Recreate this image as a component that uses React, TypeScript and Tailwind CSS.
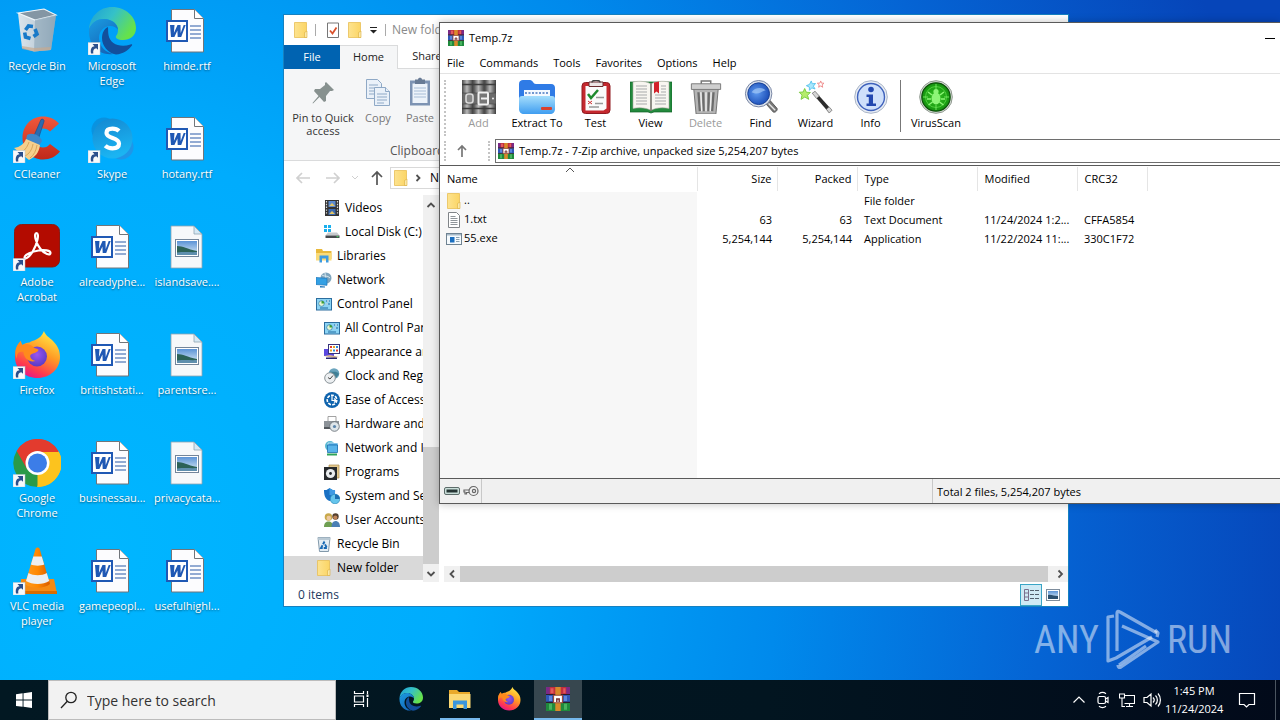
import React from "react";

type Kids = { children?: React.ReactNode };
type IconProps = { className?: string };

/* ---------- shared icons ---------- */

function Gradients() {
  return (
    <svg className="absolute size-0" aria-hidden="true">
      <defs>
        <linearGradient id="edgeA" x1="0" y1="0" x2="1" y2="0.5">
          <stop offset="0" stopColor="#1c9fd6" />
          <stop offset="0.5" stopColor="#35c1c8" />
          <stop offset="1" stopColor="#66e24a" />
        </linearGradient>
        <linearGradient id="edgeB" x1="0" y1="0" x2="0.6" y2="1">
          <stop offset="0" stopColor="#1b9de2" />
          <stop offset="1" stopColor="#1465b8" />
        </linearGradient>
        <linearGradient id="ffA" x1="0.8" y1="0" x2="0.3" y2="1">
          <stop offset="0" stopColor="#fff04a" />
          <stop offset="0.45" stopColor="#ff9a24" />
          <stop offset="0.8" stopColor="#ff3b4e" />
          <stop offset="1" stopColor="#e3158c" />
        </linearGradient>
        <radialGradient id="ffB" cx="0.5" cy="0.4" r="0.6">
          <stop offset="0" stopColor="#9a55f0" />
          <stop offset="1" stopColor="#5a3bc4" />
        </radialGradient>
        <linearGradient id="vlcA" x1="0" y1="0" x2="1" y2="0">
          <stop offset="0" stopColor="#ff9a1f" />
          <stop offset="0.5" stopColor="#ff8800" />
          <stop offset="1" stopColor="#d85c00" />
        </linearGradient>
        <linearGradient id="skA" x1="0" y1="0" x2="0.3" y2="1">
          <stop offset="0" stopColor="#1487d0" />
          <stop offset="1" stopColor="#1bb4f2" />
        </linearGradient>
        <linearGradient id="ccA" x1="0" y1="0" x2="0" y2="1">
          <stop offset="0" stopColor="#f0583c" />
          <stop offset="1" stopColor="#c0281a" />
        </linearGradient>
        <linearGradient id="binA" x1="0" y1="0" x2="1" y2="0">
          <stop offset="0" stopColor="#dbe5ec" />
          <stop offset="0.55" stopColor="#bfced9" />
          <stop offset="1" stopColor="#93a9ba" />
        </linearGradient>
        <linearGradient id="folA" x1="0" y1="0" x2="1" y2="0">
          <stop offset="0" stopColor="#fde38f" />
          <stop offset="1" stopColor="#fbd565" />
        </linearGradient>
        <linearGradient id="blueFolder" x1="0" y1="0" x2="0" y2="1">
          <stop offset="0" stopColor="#a5defc" />
          <stop offset="1" stopColor="#3f9df0" />
        </linearGradient>
        <radialGradient id="lens" cx="0.4" cy="0.45" r="0.6">
          <stop offset="0" stopColor="#5f9bf0" />
          <stop offset="1" stopColor="#1c4fb8" />
        </radialGradient>
        <radialGradient id="virus" cx="0.5" cy="0.5" r="0.5">
          <stop offset="0" stopColor="#35c322" />
          <stop offset="1" stopColor="#159310" />
        </radialGradient>
        <linearGradient id="metal" x1="0" y1="0" x2="1" y2="0">
          <stop offset="0" stopColor="#4c4c4c" />
          <stop offset="0.45" stopColor="#b9b9b9" />
          <stop offset="1" stopColor="#3e3e3e" />
        </linearGradient>
        <linearGradient id="sky" x1="0" y1="0" x2="0" y2="1">
          <stop offset="0" stopColor="#5b93d6" />
          <stop offset="1" stopColor="#dcecf6" />
        </linearGradient>
      </defs>
    </svg>
  );
}

function Shortcut() {
  return (
    <g>
      <rect x="0" y="35.500" width="12" height="12.500" fill="#f7f9fb" stroke="#b6c4d0" strokeWidth=".5" />
      <path d="M3 46.500c-.8-5 .8-7 3.500-7.300L4.500 37H10v5.800L8.300 41.200C5.800 41.500 4.800 43 5.300 46.500z" fill="#2b4f8c" />
    </g>
  );
}

function RecycleBin({ className = "size-12" }: IconProps) {
  return (
    <svg viewBox="0 0 48 48" className={className}>
      <path d="M5 6 31 2l12 6-5 35-17 1.500L9 41z" fill="url(#binA)" />
      <path d="M5 6 31 2l12 6-21 5z" fill="#8496a4" stroke="#eef5fa" strokeWidth="1.200" />
      <path d="M22 13l21-5-5 35-17 1.500z" fill="#8fa7b8" opacity=".65" />
      <path d="M9 39l12 2 17-1-.5 3L21 44.500 9 42z" fill="#c7a98f" opacity=".7" />
      <g fill="none" stroke="#1779c8" strokeWidth="3.600">
        <path d="M12.500 23l3-4 4.500.5" />
        <path d="M22 22l2 5-3.500 2.500" />
        <path d="M17.500 31.500 12.500 30l-.8-4.500" />
      </g>
    </svg>
  );
}

function EdgeIcon({ className = "size-12", shortcut = false }: IconProps & { shortcut?: boolean }) {
  return (
    <svg viewBox="0 0 48 48" className={className}>
      <path d="M1 22C2 9 12 0 24 0c14 0 24 10 24 21 0 8-6 12-13 12-5 0-8-2-7-4 1-1 2-3 2-6 0-6-6-11-14-11C9 12 4 16 1 22z" fill="url(#edgeA)" />
      <path d="M1 22C4 15 9 12 16 12c8 0 14 5 14 11-1-2-4-4-8-4-6 0-11 5-11 12 0 8 6 14 14 16-14 2-25-9-24-25z" fill="url(#edgeB)" />
      <path d="M20 20c-4 2-6 6-6 11 0 8 6 15 14 16.500 7-.5 12-4 16-9 .5-1-.3-1.500-1.500-1C32 41 22 37 20.500 28c-.5-3-.3-6-.5-8z" fill="#124f9c" />
      {shortcut && <Shortcut />}
    </svg>
  );
}

function WordDoc() {
  return (
    <svg viewBox="0 0 48 48" className="size-12">
      <path d="M8.500 2.500h23l9 9v33.500h-32z" fill="#fcfcfe" stroke="#71757a" />
      <path d="M31.500 2.500v9h9" fill="#fff" stroke="#71757a" />
      <path d="M27 19h11M27 23h11M27 27h11M27 31h11" stroke="#2a5aa8" strokeWidth="1.200" />
      <rect x="4" y="14" width="20" height="20" fill="#fff" stroke="#1f58b4" strokeWidth="2" />
      <path d="M7 18h4.500l-.6 8 3.600-8h3l.2 8 3-8h2l-4.500 12h-3.500l-.3-6.500-3 6.500H8z" fill="#1f58b4" />
    </svg>
  );
}

function ImageDoc() {
  return (
    <svg viewBox="0 0 48 48" className="size-12">
      <path d="M8 3h23l8 8v34H8z" fill="#f6f8fa" stroke="#8fa3b2" strokeWidth=".8" />
      <path d="M31 3v8h8z" fill="#d5e9f5" stroke="#8fa3b2" strokeWidth=".8" />
      <rect x="12.500" y="16.500" width="23" height="17" fill="#fff" stroke="#73859a" />
      <rect x="14" y="18" width="20" height="14" fill="url(#sky)" />
      <path d="M14 23c6 0 10 3 20 5v4H14z" fill="#2c6257" />
      <path d="M14 29.500c8-1 14 0 20-.5v3H14z" fill="#5f8fae" />
    </svg>
  );
}

function CCleaner() {
  return (
    <svg viewBox="0 0 48 48" className="size-12">
      <path d="M46 8.500C42 4 36 1.500 30 1.500 18 1.500 9.500 11 9.500 23S18 44.500 30 44.500c7 0 13-3 17-8l-10-7.500c-2 2.500-4 3.500-7 3.500-5 0-8.500-4-8.500-9.500s3.500-9.500 8.500-9.500c3 0 5 1 7 3z" fill="url(#ccA)" />
      <path d="M28 4.500c1.500-1 3.500 0 3 2L25 25l-5-2z" fill="#2b6bb0" stroke="#174a86" strokeWidth=".6" />
      <path d="M14 20c5-3 13 0 15 6l-3 5-13-6z" fill="#3f87c9" />
      <path d="M13 24l14 6c-1 8-5 12-11 15L1 33c6-1 10-4 12-9z" fill="#f6cf8c" />
      <path d="M16 27c-2 6-5 9-9 11M20 29c-1 6-4 10-8 12M24 30c-1 6-3 10-7 13" stroke="#d9a55a" fill="none" />
      <Shortcut />
    </svg>
  );
}

function SkypeIcon() {
  return (
    <svg viewBox="0 0 48 48" className="size-12">
      <circle cx="16" cy="15" r="12.500" fill="#1180c8" opacity=".55" />
      <circle cx="33" cy="32" r="12.500" fill="#2a8fe0" opacity=".75" />
      <circle cx="24.500" cy="23.500" r="20" fill="url(#skA)" />
      <path d="M31 16c-1.500-1.500-4-2.300-6.500-2.300-4 0-6 1.800-6 4.300 0 6 12.500 4 12.500 10.500 0 3.500-3 4.800-6.500 4.800-3 0-5.500-.8-7.300-2.500" fill="none" stroke="#fff" strokeWidth="4.200" />
      <Shortcut />
    </svg>
  );
}

function AcrobatIcon() {
  return (
    <svg viewBox="0 0 48 48" className="size-12">
      <rect x="1.500" y="1.500" width="45" height="42.500" rx="7" fill="#b30b00" stroke="#8a1a12" />
      <path d="M23.500 10c3 0 1 11-4 19-4 6-8 8-8 5.500 0-3 8-6 14-7s12 0 12 2.500c0 3-6 1-10-4-5-6-7-16-4-16z" fill="none" stroke="#fff" strokeWidth="2.200" />
      <Shortcut />
    </svg>
  );
}

function FirefoxIcon({ className = "size-12", shortcut = false }: IconProps & { shortcut?: boolean }) {
  return (
    <svg viewBox="0 0 48 48" className={className}>
      <path d="M31 0c1 4 6 7 9 10 5 5 7 10 7 16 0 12-10 21-22.500 21S2 38 2 26C2 19 4 14 8 10c0 2 .5 3 1.500 4 2-1.500 4-2.500 7-2.500C19 9 27 10 31 0z" fill="url(#ffA)" />
      <circle cx="24" cy="25.500" r="10" fill="url(#ffB)" />
      <path d="M8 10c0 2 .5 3 1.500 4 4-2 8-1 12 3 2 1 4 1 4 2-1 3-6 3-8 5-1 2 1 5 5 6-6 2-12-3-12-9C4 20 4 24 4 28c-4-8 0-15 4-18z" fill="#ff8a1c" />
      {shortcut && <Shortcut />}
    </svg>
  );
}

function ChromeIcon() {
  return (
    <svg viewBox="0 0 48 48" className="size-12">
      <path d="M24.500 24 3.700 12A24 24 0 0 1 45.300 12z" fill="#e33b2e" />
      <path d="M24.500 24 45.300 12A24 24 0 0 1 24.500 48l-3-6z" fill="#fcc31e" />
      <path d="M24.500 24 24.500 48A24 24 0 0 1 3.700 12z" fill="#2a9a48" />
      <path d="M24.500 13H45.800a24 24 0 0 0-42.100-1L14 30z" fill="#e33b2e" />
      <path d="M34 30 24 48A24 24 0 0 0 45.800 13H24.500z" fill="#fcc31e" />
      <circle cx="24.500" cy="24" r="12" fill="#fff" />
      <circle cx="24.500" cy="24" r="9.500" fill="#3c7de8" />
      <Shortcut />
    </svg>
  );
}

function VlcIcon() {
  return (
    <svg viewBox="0 0 48 48" className="size-12">
      <path d="M8 32h33l3 14.500H7z" fill="#f58a14" />
      <path d="M7 44h37v3H7z" fill="#d86c00" />
      <path d="M22.500 2c.8-2 3.500-2 4.200 0L37 37c-6 5-19 5-25 0z" fill="url(#vlcA)" />
      <path d="M20.300 9.500h8.500l2.400 8c-3 1.500-10 1.500-13.300 0zM15.500 26c5 3 13.500 3 18.300 0l2.400 8c-6 4-17 4-23.200 0z" fill="#eceef0" />
      <Shortcut />
    </svg>
  );
}

function Folder({ className = "size-4" }: IconProps) {
  return (
    <svg viewBox="0 0 16 16" className={`shrink-0 ${className}`}>
      <path d="M1.500.5h12v15h-12z" fill="url(#folA)" stroke="#e8bf55" strokeWidth=".8" />
      <path d="M11.500 10.500 14 9v6.500h-2.500z" fill="#fbe8a9" stroke="#dcae3d" strokeWidth=".6" />
    </svg>
  );
}

function RarIcon({ className = "size-4" }: IconProps) {
  return (
    <svg viewBox="0 0 16 16" className={`shrink-0 ${className}`}>
      <path d="M0 0h16v5H0z" fill="#c22f3c" />
      <path d="M0 5.200h16v5H0z" fill="#2f57b8" />
      <path d="M0 10.400h16V16H0z" fill="#1f8a3c" />
      <path d="M0 0h2.500v5H0zM13.500 0H16v5h-2.500z" fill="#7b2a86" />
      <path d="M3 .8h2v3.400H3zM11.500.8h1.500v3.400h-1.500z" fill="#e25a5f" />
      <path d="M2 6h2v3.400H2zM12 6h2v3.400h-2z" fill="#5c86dd" />
      <path d="M2 11.200h2v4H2zM12 11.200h2v4h-2z" fill="#48b45f" />
      <path d="M0 4.600h16v.8H0zM0 9.900h16v.8H0z" fill="#2b1c2a" />
      <path d="M6.200 0h3.600v16H6.200z" fill="#d88a2a" />
      <path d="M5 5.500h6v5H5z" fill="#fff" stroke="#9b4a3a" strokeWidth=".8" />
      <path d="M7.200 10V8h1.600v2" fill="none" stroke="#7d3030" strokeWidth="1" />
    </svg>
  );
}

/* ---------- tree icons ---------- */

const treeIcons: Record<string, React.ReactNode> = {
  video: (
    <>
      <rect x="1" y="0" width="14" height="16" fill="#333" />
      <path d="M2.500 1v14M13.500 1v14" stroke="#ddd" strokeWidth="1.200" strokeDasharray="1.400 1.400" />
      <rect x="4.500" y="1" width="7" height="6" fill="#5d8bd0" />
      <rect x="4.500" y="9" width="7" height="6" fill="#3d6bb0" />
      <path d="M5 6l3-3 3 3M5 14l3-3 3 3" fill="#e4c667" />
    </>
  ),
  disk: (
    <>
      <path d="M0 1h3v3H0zM4 1h3v3H4zM0 5h3v3H0zM4 5h3v3H4z" fill="#1ab0ee" />
      <path d="M4 8.500h9l2.500 3H1.500z" fill="#c7cacd" />
      <path d="M1.500 11.500h14V14h-14z" fill="#45494d" />
      <path d="M12.500 12.200h2v1h-2z" fill="#4be36a" />
    </>
  ),
  library: (
    <>
      <path d="M0 1h6l1 2h8.500v8H0z" fill="#e9b93b" />
      <path d="M0 5h15.500v7.500H0z" fill="#fadb78" />
      <path d="M3.500 14.500v-7h9v7h-2.500v-4H6v4z" fill="#3d9be0" />
    </>
  ),
  network: (
    <>
      <circle cx="10" cy="6" r="5.500" fill="#7fa5bd" />
      <path d="M6 3c3 2 5 0 8 3M9 1c0 3 2 6 1 10" stroke="#d7e7ef" fill="none" />
      <path d="M0 5.500l11 .8v7L0 12.500z" fill="#33a0e4" stroke="#1b73b8" strokeWidth=".7" />
      <path d="M4 14l5 .5v1H4z" fill="#1b73b8" />
    </>
  ),
  control: (
    <>
      <rect x=".5" y="2.500" width="15" height="11.500" fill="#8bd3f4" stroke="#2c6d9e" />
      <circle cx="5.500" cy="7.500" r="2.800" fill="#e9f7d3" stroke="#2f7aa8" strokeWidth=".7" />
      <path d="M5.500 7.500V4.700a2.800 2.800 0 0 1 2.800 2.800z" fill="#3e9e36" />
      <path d="M10 5h4M10 8h4M4 12h8" stroke="#1f6aa0" strokeWidth="1.200" />
      <path d="M12 4v2M11 7v2" stroke="#fff" />
    </>
  ),
  appearance: (
    <>
      <path d="M0 5h10v7H0z" fill="#5a48e0" />
      <path d="M0 12l10 2 5-1-9-2z" fill="#d4b08a" />
      <rect x="4.500" y=".5" width="11" height="9" fill="#fff" stroke="#39347a" />
      <path d="M6 2h2v2H6zM12 5.500h2v2h-2z" fill="#e23d31" />
      <path d="M9 2h2v2H9zM6 5.500h2v2H6z" fill="#e6a520" />
      <path d="M12 2h2v2h-2zM9 5.500h2v2H9z" fill="#2f8cd8" />
      <path d="M2 13.500h11v1.500H2z" fill="#2a2470" />
    </>
  ),
  clock: (
    <>
      <circle cx="10" cy="5.500" r="5.300" fill="#6aa4bd" />
      <path d="M6 3c3 2 6-1 9 3l-3 4z" fill="#3f7f95" />
      <circle cx="6" cy="10" r="5.300" fill="#eceff1" stroke="#8b9499" />
      <path d="M6 11 9 7.500M4 9.500 6 11" stroke="#444" fill="none" />
    </>
  ),
  ease: (
    <>
      <circle cx="8" cy="8" r="8" fill="#0f63ad" />
      <circle cx="8" cy="8" r="4.800" fill="none" stroke="#fff" strokeWidth="1.600" strokeDasharray="3 1.200" />
      <path d="M8 4v4.500h4M10 6.500l2.300 2-2.300 2" fill="none" stroke="#fff" strokeWidth="1.200" />
    </>
  ),
  hardware: (
    <>
      <path d="M4 0.500h8v5H4z" fill="#fff" stroke="#8c8c8c" strokeWidth=".8" />
      <path d="M0 5h15v6H0z" fill="#8d9399" />
      <path d="M0 11h15v2H0z" fill="#53585d" />
      <circle cx="10.500" cy="10.500" r="4.800" fill="#dfe6ea" stroke="#5f676d" strokeWidth=".8" />
      <circle cx="10.500" cy="10.500" r="1.600" fill="#5d86ac" />
    </>
  ),
  netint: (
    <>
      <circle cx="6" cy="6" r="5" fill="#58b7d2" />
      <path d="M4 3h10v7H4z" fill="#4ba8e2" stroke="#fff" strokeWidth=".6" />
      <path d="M3.500 5h10v7.500h-10z" fill="#58b4ea" stroke="#1d6fae" strokeWidth=".8" />
      <path d="M3 13.500h10v2H3z" fill="#2ea35a" />
    </>
  ),
  programs: (
    <>
      <path d="M5 1h10v13H5z" fill="#e4c98f" stroke="#ad8c4d" strokeWidth=".7" />
      <rect x="0" y="3" width="13" height="13" fill="#26292c" />
      <circle cx="6.500" cy="9.500" r="4.600" fill="#e9ecee" />
      <circle cx="6.500" cy="9.500" r="1.400" fill="#26292c" />
    </>
  ),
  system: (
    <>
      <path d="M0 2c3 .5 4-1 5.500-2C7 1 8.500 2.500 11 2c.5 5-1 9-5.500 11C1 11 0 7 0 2z" fill="#1a71c4" />
      <path d="M5.500 0C7 1 8.500 2.500 11 2c.2 2 0 4-.6 5.500L5.500 7z" fill="#3f9be4" />
      <circle cx="11" cy="11" r="4.800" fill="#65c5ec" stroke="#1f7fb4" strokeWidth=".6" />
      <path d="M11 11V6.200a4.800 4.800 0 0 1 4.800 4.800z" fill="#1b6fb0" />
    </>
  ),
  users: (
    <>
      <circle cx="4.500" cy="5" r="3.800" fill="#c9a94c" />
      <circle cx="4.800" cy="6" r="2.300" fill="#eec9a0" />
      <path d="M0 15c0-4 2-5.500 4.500-5.500S9 11 9 15z" fill="#6f9f52" />
      <circle cx="11.500" cy="4.500" r="3.200" fill="#54402f" />
      <circle cx="11.300" cy="5.600" r="2.100" fill="#bf8458" />
      <path d="M7.500 15c0-4 1.500-6 4-6S16 11 16 15z" fill="#4a7fb5" />
    </>
  ),
  bin: (
    <>
      <path d="M2 1.500h12l-1.500 14h-9z" fill="#e3edf4" stroke="#8299aa" />
      <path d="M2 1.500h12L13.700 4H2.300z" fill="#b9c9d4" />
      <path d="M5 12l3-5.500L11 12z" fill="none" stroke="#1668b4" strokeWidth="1.900" strokeDasharray="3.200 1" />
    </>
  ),
};

function TreeIcon({ name }: { name: string }) {
  if (name === "folder") return <Folder />;
  return (
    <svg viewBox="0 0 16 16" className="size-4 shrink-0">
      {treeIcons[name]}
    </svg>
  );
}

function Chevron({ d, className = "" }: { d: string; className?: string }) {
  return (
    <svg viewBox="0 0 16 16" className={`size-4 shrink-0 ${className}`} fill="none" stroke="#505050" strokeWidth="1.800">
      <path d={d} />
    </svg>
  );
}

/* ---------- desktop ---------- */

const shortcuts: { label: string; icon: React.ReactNode }[] = [
  { label: "Recycle Bin", icon: <RecycleBin /> },
  { label: "CCleaner", icon: <CCleaner /> },
  { label: "Adobe Acrobat", icon: <AcrobatIcon /> },
  { label: "Firefox", icon: <FirefoxIcon shortcut /> },
  { label: "Google Chrome", icon: <ChromeIcon /> },
  { label: "VLC media player", icon: <VlcIcon /> },
  { label: "Microsoft Edge", icon: <EdgeIcon shortcut /> },
  { label: "Skype", icon: <SkypeIcon /> },
  { label: "alreadyphe...", icon: <WordDoc /> },
  { label: "britishstati...", icon: <WordDoc /> },
  { label: "businessau...", icon: <WordDoc /> },
  { label: "gamepeopl...", icon: <WordDoc /> },
  { label: "himde.rtf", icon: <WordDoc /> },
  { label: "hotany.rtf", icon: <WordDoc /> },
  { label: "islandsave....", icon: <ImageDoc /> },
  { label: "parentsre...", icon: <ImageDoc /> },
  { label: "privacycata...", icon: <ImageDoc /> },
  { label: "usefulhighl...", icon: <WordDoc /> },
];

function DesktopIcons() {
  return (
    <div className="grid w-fit grid-flow-col grid-cols-[repeat(3,74px)] grid-rows-[repeat(6,108px)] gap-x-px pt-[7px]">
      {shortcuts.map((s) => (
        <button key={s.label} className="flex flex-col items-center gap-[3px] text-[11px] leading-[15px] text-white">
          {s.icon}
          <span className="max-w-[66px] text-center [text-shadow:0_1px_2px_rgba(0,0,0,0.5)]">{s.label}</span>
        </button>
      ))}
    </div>
  );
}

/* ---------- explorer window ---------- */

const tree: [string, string, number][] = [
  ["Videos", "video", 2],
  ["Local Disk (C:)", "disk", 2],
  ["Libraries", "library", 1],
  ["Network", "network", 1],
  ["Control Panel", "control", 1],
  ["All Control Panel Items", "control", 2],
  ["Appearance and Personalization", "appearance", 2],
  ["Clock and Region", "clock", 2],
  ["Ease of Access", "ease", 2],
  ["Hardware and Sound", "hardware", 2],
  ["Network and Internet", "netint", 2],
  ["Programs", "programs", 2],
  ["System and Security", "system", 2],
  ["User Accounts", "users", 2],
  ["Recycle Bin", "bin", 1],
  ["New folder", "folder", 1],
];

function RibbonButton({ children, label, muted = false }: Kids & { label: string; muted?: boolean }) {
  return (
    <button className={`flex flex-col items-center gap-[2px] leading-[13px] ${muted ? "text-[#777]" : "text-[#333]"}`}>
      {children}
      <span className="text-center">{label}</span>
    </button>
  );
}

function NavArrow({ d, stroke }: { d: string; stroke: string }) {
  return (
    <svg viewBox="0 0 16 16" className="size-4" fill="none" stroke={stroke} strokeWidth="1.700">
      <path d={d} />
    </svg>
  );
}

function Explorer() {
  return (
    <section aria-label="New folder" className="absolute left-[283px] top-[14px] flex w-[786px] flex-col border border-[#1681c0] bg-white text-[11px] text-black">
      <header className="flex h-[30px] items-center gap-[6px] pl-[9px] text-[#8a8a8a]">
        <Folder />
        <span className="h-3 w-px bg-[#aaa]" />
        <svg viewBox="0 0 16 16" className="ml-[3px] size-4">
          <path d="M2.500 1h11v14.500h-11z" fill="#fff" stroke="#777" />
          <path d="M5 8.500l2.500 3 4-6" fill="none" stroke="#d9512c" strokeWidth="1.800" />
        </svg>
        <Folder />
        <svg viewBox="0 0 9 9" className="size-[9px]">
          <path d="M1 1.500h7" stroke="#222" />
          <path d="M1 4h7L4.500 7.500z" fill="#222" />
        </svg>
        <span className="ml-px h-3 w-px bg-[#aaa]" />
        <span className="text-[12px]">New folder</span>
      </header>
      <nav className="flex h-6 text-[#222]">
        <button className="w-14 bg-[#0063b1] text-white">File</button>
        <button className="w-[58px] border-r border-t border-[#dadbdc] bg-[#f5f6f7]">Home</button>
        <button className="w-[58px] border-b border-[#dadbdc]">Share</button>
        <span className="flex-1 border-b border-[#dadbdc]" />
      </nav>
      <div className="flex h-[92px] flex-col justify-between border-b border-[#dadbdc] bg-[#f5f6f7] pt-2">
        <div className="flex">
          <div className="w-[78px] px-1">
            <RibbonButton label="Pin to Quick access">
              <svg viewBox="0 0 32 32" className="size-8">
                <path d="M19 5l8 8-2 1-2 0-4 5v5l-2 1-4.500-5L6 26.500l-.5-.5 6-7-4.500-5 1-2h5l5-4v-2z" fill="#87918f" />
              </svg>
            </RibbonButton>
          </div>
          <div className="flex w-8 justify-center">
            <RibbonButton label="Copy" muted>
              <svg viewBox="0 0 32 32" className="size-8" fill="#eaf1f9" stroke="#8fa9c6">
                <path d="M4.500 2.500h11l4 4v15h-15z" />
                <path d="M7 8h9M7 11h9M7 14h9M7 17h7" />
                <path d="M12.500 10.500h11l4 4v14h-15z" />
                <path d="M23.500 10.500v4h4M15 17h10M15 20h10M15 23h10M15 26h7" />
              </svg>
            </RibbonButton>
          </div>
          <div className="ml-2 flex w-9 justify-center">
            <RibbonButton label="Paste" muted>
              <svg viewBox="0 0 32 32" className="size-8">
                <rect x="6" y="3.500" width="20" height="25" fill="#7d93b3" />
                <rect x="8.500" y="6.500" width="15" height="19.500" fill="#edf3fa" />
                <path d="M10 11h12M10 14h12M10 17h12M10 20h12" stroke="#a8bdd6" />
                <path d="M11 2.500h3c0-2.500 4-2.500 4 0h3V7H11z" fill="#687b95" />
              </svg>
            </RibbonButton>
          </div>
        </div>
        <span className="pl-[106px] text-[12px] text-[#555]">Clipboard</span>
      </div>
      <div className="flex h-[34px] items-center gap-[5px] pl-[11px]">
        <div className="flex items-center gap-[10px]">
          <NavArrow d="M15 8H2M7 3 2 8l5 5" stroke="#d0d0d0" />
          <span className="pl-1">
            <NavArrow d="M1 8h13M9 3l5 5-5 5" stroke="#d0d0d0" />
          </span>
          <svg viewBox="0 0 8 8" className="size-2">
            <path d="M1 2l3 3 3-3" stroke="#d0d0d0" fill="none" />
          </svg>
          <NavArrow d="M8 15V2M3 7l5-5 5 5" stroke="#555" />
        </div>
        <div className="flex h-[22px] flex-1 items-center gap-px border border-[#d9d9d9] px-[2px] text-[12px]">
          <Folder />
          <Chevron d="M6.500 5l3 3-3 3" />
          <span className="pl-[3px]">New folder</span>
        </div>
      </div>
      <div className="flex h-[388px] pb-px text-[12px]">
        <ul className="w-[139px] overflow-hidden pt-px">
          {tree.map(([label, icon, level]) => (
            <li
              key={label}
              className={`flex h-6 items-center gap-[5px] whitespace-nowrap ${level === 2 ? "pl-10" : "pl-8"} ${label === "New folder" ? "bg-[#d9d9d9]" : ""}`}
            >
              <TreeIcon name={icon} />
              <span>{label}</span>
            </li>
          ))}
        </ul>
        <div className="flex w-4 flex-col items-center bg-[#f0f0f0]">
          <Chevron d="M4.500 10 8 6.500l3.500 3.500" className="mt-[2px]" />
          <div className="flex-1" />
          <div className="h-[117px] w-full bg-[#cdcdcd]" />
          <Chevron d="M4.500 6 8 9.500 11.500 6" className="mt-[2px]" />
        </div>
        <div className="flex flex-1 flex-col justify-end pl-[5px]">
          <div className="flex h-4 items-center bg-[#f0f0f0]">
            <Chevron d="M10 4.500 6.500 8l3.500 3.500" />
            <div className="h-full flex-1 bg-[#cdcdcd]" />
            <Chevron d="M6.500 4.500 10 8l-3.500 3.500" className="ml-1" />
          </div>
        </div>
      </div>
      <footer className="flex h-[23px] items-center pl-[14px] pr-1 text-[12px] text-[#1d3a5f]">
        <span className="flex-1">0 items</span>
        <button aria-label="Details view" className="flex size-[22px] items-center justify-center border border-[#3aa5c6] bg-[#cfeaf5]">
          <svg viewBox="0 0 18 14" className="h-[14px] w-[18px]" fill="none" stroke="#51606d">
            <path d="M2.500 1.500h4v11h-4zM2.500 5h4M2.500 9h4" stroke="#7a6f8d" />
            <path d="M8 2.500h4M13 2.500h4M8 6.500h4M13 6.500h4M8 10.500h4M13 10.500h4" />
          </svg>
        </button>
        <button aria-label="Thumbnail view" className="flex size-[22px] items-center justify-center">
          <svg viewBox="0 0 14 12" className="h-3 w-[14px]">
            <rect x=".5" y=".5" width="13" height="11" fill="#fff" stroke="#7e8d9c" />
            <rect x="2" y="2" width="10" height="7" fill="url(#sky)" />
            <path d="M2 6c3-1 6 1 10 1v3H2z" fill="#2b4f6e" />
          </svg>
        </button>
      </footer>
    </section>
  );
}

/* ---------- archive window ---------- */

function Books() {
  return (
    <svg viewBox="0 0 34 34" className="size-[34px]">
      <rect width="34" height="34" fill="#5a5a5a" />
      <rect x="0" width="11" height="34" fill="url(#metal)" />
      <rect x="11.500" width="11" height="34" fill="url(#metal)" />
      <rect x="23" width="11" height="34" fill="url(#metal)" />
      <path d="M0 4.500h34M0 28.500h34" stroke="#3d3d3d" strokeWidth="1.500" />
      <path d="M0 13h34v11H0z" fill="#6b6b6b" stroke="#444" strokeWidth=".6" />
      <rect x="4" y="14" width="7" height="9" rx="2.500" fill="#888" stroke="#d9d9d9" strokeWidth="1.600" />
      <rect x="16.500" y="12.500" width="9.500" height="12" rx="1" fill="#777" stroke="#f1f1f1" strokeWidth="2" />
      <path d="M19 18.500h6" stroke="#f1f1f1" strokeWidth="2" />
      <circle cx="31" cy="18.500" r="1" fill="#eee" />
    </svg>
  );
}

function ExtractIcon() {
  return (
    <svg viewBox="0 0 36 34" className="h-[34px] w-9">
      <path d="M0 4c0-3 2-4 4-4h7c3 0 3 4 6 4h15c3 0 4 2 4 4v20H0z" fill="#2f7be6" />
      <path d="M5 10h26v10H5z" fill="#f4f9ff" />
      <path d="M6 13h24" stroke="#7196cf" strokeWidth="2" strokeDasharray="2 1.500" />
      <path d="M0 19c0-2 1-3 3-3h30c2 0 3 1 3 3v10c0 3-2 5-5 5H5c-3 0-5-2-5-5z" fill="url(#blueFolder)" />
      <rect x="22" y="27" width="11" height="3" rx="1" fill="#d8412f" />
    </svg>
  );
}

function TestIcon() {
  return (
    <svg viewBox="0 0 30 34" className="h-[34px] w-[30px]">
      <rect x="1" y="2.500" width="28" height="31" rx="3.500" fill="#c5282e" stroke="#8f1a20" />
      <path d="M4.500 6h21v22.500l-3 2h-18z" fill="#fafafa" />
      <path d="M8 2h14v4.500H8z" fill="#ece4e4" stroke="#6b2b2e" />
      <path d="M11 2.500c0-3 8-3 8 0" fill="none" stroke="#444" strokeWidth="1.500" />
      <path d="M7 14l3 4 7-8" fill="none" stroke="#1e8a2d" strokeWidth="2.500" />
      <path d="M15 17.500h8M14 23.500h8M8 27h10" stroke="#999" strokeWidth="1.300" />
      <path d="M7 21l4 3M11 21l-4 3" stroke="#ce3030" />
    </svg>
  );
}

function ViewIcon() {
  return (
    <svg viewBox="0 0 42 34" className="h-[34px] w-[42px]">
      <path d="M0 2h42v30H24l-3 1-3-1H0z" fill="#238a3d" stroke="#0f5f25" strokeWidth=".7" />
      <path d="M3 2c7-1.500 14-.5 18 2 4-2.500 11-3.500 18-2v26.500c-7-1.500-14-.5-18 2-4-2.500-11-3.500-18-2z" fill="#f8f6f1" stroke="#aaa79e" strokeWidth=".6" />
      <path d="M21 3.500V31" stroke="#6d6a62" strokeWidth="1.500" />
      <path d="M6 6h11M6 9h11M6 12h11M6 15h11M6 18h11M6 21h11M6 24h11M31 6h5M31 9h5M31 12h5M25 15h11M25 18h11M25 21h11M25 24h11" stroke="#a7a9aa" />
      <path d="M24 2.500l5-1v12l-2.500-2-2.500 2z" fill="#d3232b" />
    </svg>
  );
}

function DeleteIcon() {
  return (
    <svg viewBox="0 0 32 36" className="h-[34px] w-8">
      <path d="M3 9h26l-2.500 27h-21z" fill="#b4b4b4" stroke="#707070" />
      <path d="M8 13l1.500 20M13 13l.5 20M19 13l-.5 20M24 13l-1.500 20" stroke="#6c6c6c" strokeWidth="2.400" />
      <path d="M10.500 13l1 20M16 13v20M21.500 13l-1 20" stroke="#eee" strokeWidth="1.500" />
      <path d="M.5 4h31v6H.5z" fill="#cfcfcf" stroke="#777" />
      <path d="M11 4V1h10v3" fill="none" stroke="#777" strokeWidth="1.600" />
    </svg>
  );
}

function FindIcon() {
  return (
    <svg viewBox="0 0 36 36" className="h-[34px] w-9">
      <path d="M23 25l4-4 8 9c1 2-2 5-4 4z" fill="#777" stroke="#444" strokeWidth=".8" />
      <path d="M26 25l7 7" stroke="#e5e5e5" strokeWidth="1.500" />
      <circle cx="15.500" cy="14.500" r="14" fill="#dde3ec" stroke="#7482a0" />
      <circle cx="15.500" cy="14.500" r="11.500" fill="url(#lens)" stroke="#173f93" />
      <path d="M8 13c3-5 11-6 15-2-4 0-7 6-15 2z" fill="#a9ccf8" opacity=".65" />
    </svg>
  );
}

function WizardIcon() {
  return (
    <svg viewBox="0 0 36 36" className="h-[34px] w-9">
      <path d="M14 14l3-2 18 20-3 3z" fill="#2c2c2c" />
      <path d="M14 14l3-2 4.500 5-3 2.500zM29 31l3-2.500 3 3.500-3 3z" fill="#d5d5d5" stroke="#777" strokeWidth=".6" />
      <path d="M6 9l1.800 4 4.200.2-3 3 1.300 4.300L6.200 18l-4 2.500 1-4.500-3-3 4.200-.3z" fill="#b5ec6c" stroke="#79cb3e" />
      <path d="M13 1l1 3 3.500-.3-2.300 2.800 1.800 3L13.500 8.300 11 11V7.500L7.800 6l3.300-1.300z" fill="#a9e7fc" stroke="#58c4ee" />
      <path d="M23 1l.8 2.300 2.700.1-2 1.700.6 2.600L23 6.300l-2.200 1.400.6-2.600-2-1.700 2.700-.1z" fill="#fff" stroke="#ee8a8a" />
    </svg>
  );
}

function InfoIcon() {
  return (
    <svg viewBox="0 0 34 34" className="size-[34px]">
      <circle cx="17" cy="17" r="16.300" fill="#e8edf5" stroke="#a9b4c6" />
      <circle cx="17" cy="17" r="13.500" fill="#cfe0fb" stroke="#3f62bc" strokeWidth="1.400" />
      <circle cx="17" cy="9.500" r="2.800" fill="#2348b0" />
      <path d="M12.500 14.500h6.500v9h3v2.500H12.500v-2.500h2.300v-6.500h-2.300z" fill="#2348b0" />
    </svg>
  );
}

function VirusIcon() {
  return (
    <svg viewBox="0 0 34 34" className="size-[34px]">
      <circle cx="17" cy="17" r="16.300" fill="#d9ddd9" stroke="#8d978d" />
      <circle cx="17" cy="17" r="14.200" fill="url(#virus)" stroke="#0d4f0a" strokeWidth="1.200" />
      <circle cx="17" cy="17" r="10.500" fill="none" stroke="#4fd03c" />
      <path d="M17 4v5M17 25v5M4 17h5M25 17h5" stroke="#6fe45c" />
      <ellipse cx="17" cy="18.500" rx="4.500" ry="6" fill="#8df577" />
      <circle cx="17" cy="11.500" r="2.600" fill="#8df577" />
      <path d="M13 15l-4-3M21 15l4-3M12 19H8M22 19h4M13.500 22l-4 3M20.500 22l4 3" stroke="#8df577" strokeWidth="1.500" />
    </svg>
  );
}

const tools: { label: string; icon: React.ReactNode; off?: boolean; wide?: boolean }[] = [
  { label: "Add", icon: <Books />, off: true },
  { label: "Extract To", icon: <ExtractIcon />, wide: true },
  { label: "Test", icon: <TestIcon /> },
  { label: "View", icon: <ViewIcon /> },
  { label: "Delete", icon: <DeleteIcon />, off: true },
  { label: "Find", icon: <FindIcon /> },
  { label: "Wizard", icon: <WizardIcon /> },
  { label: "Info", icon: <InfoIcon /> },
];

function ToolButton({ label, icon, off, wide }: { label: string; icon: React.ReactNode; off?: boolean; wide?: boolean }) {
  return (
    <button className={`flex flex-col items-center gap-px whitespace-nowrap leading-4 ${wide ? "w-[62px]" : "w-[55px]"} ${off ? "text-[#9a9a9a]" : "text-black"}`}>
      {icon}
      <span>{label}</span>
    </button>
  );
}

const files = [
  { name: "..", kind: "folder", size: "", packed: "", type: "File folder", modified: "", crc: "" },
  { name: "1.txt", kind: "text", size: "63", packed: "63", type: "Text Document", modified: "11/24/2024 1:2...", crc: "CFFA5854" },
  { name: "55.exe", kind: "app", size: "5,254,144", packed: "5,254,144", type: "Application", modified: "11/22/2024 11:...", crc: "330C1F72" },
];

function FileIcon({ kind }: { kind: string }) {
  if (kind === "folder") return <Folder />;
  return (
    <svg viewBox="0 0 16 16" className="size-4 shrink-0">
      {kind === "text" ? (
        <>
          <path d="M2.500.5h8l3 3v12h-11z" fill="#fff" stroke="#808488" />
          <path d="M4.500 4.500h5M4.500 6.500h7M4.500 8.500h7M4.500 10.500h7M4.500 12.500h7" stroke="#8f959a" />
        </>
      ) : (
        <>
          <rect x=".5" y="2.500" width="15" height="11" fill="#f5fafd" stroke="#6f8392" />
          <path d="M1 3h14v1.500H1z" fill="#a7bac8" />
          <path d="M4 6h4.500v5.500H4z" fill="#1b6fc0" />
          <path d="M10 6.500h3.500M10 8.500h3.500M10 10.500h3.500" stroke="#8aa0b0" />
        </>
      )}
    </svg>
  );
}

function Archive() {
  const th = "h-6 border-r border-[#e5e5e5] pl-[7px] pr-[5px] font-normal";
  const td = "h-[19px] whitespace-nowrap pl-[7px] pr-[5px] leading-[19px]";
  return (
    <section
      aria-label="Temp.7z"
      className="absolute left-[439px] right-0 top-[22px] flex h-[482px] flex-col border border-r-0 border-[#5a5a5a] bg-white text-[11px] text-black shadow-[0_0_8px_rgba(0,0,0,0.25)]"
    >
      <header className="flex h-[30px] items-center gap-[5px] pl-2 pr-[5px]">
        <RarIcon />
        <span className="flex-1">Temp.7z</span>
        <button aria-label="Minimize" className="flex h-4 items-center">
          <span className="h-px w-[10px] bg-black" />
        </button>
      </header>
      <nav className="flex h-5 items-center gap-[15px] px-[7px]">
        {["File", "Commands", "Tools", "Favorites", "Options", "Help"].map((m) => (
          <button key={m}>{m}</button>
        ))}
      </nav>
      <div className="flex h-[65px] items-start border-t border-[#e3e3e3] pt-[6px]">
        <span className="ml-1 mr-[5px] h-14 border-l-2 border-dotted border-[#c4c4c4]" />
        {tools.map((t) => (
          <ToolButton key={t.label} {...t} />
        ))}
        <span className="ml-[2px] mr-1 h-[52px] w-px bg-[#777]" />
        <ToolButton label="VirusScan" icon={<VirusIcon />} wide />
      </div>
      <div className="flex h-[26px] items-center">
        <span className="ml-1 h-5 border-l-2 border-dotted border-[#c4c4c4]" />
        <button aria-label="Up" className="ml-2 mr-[18px]">
          <NavArrow d="M8 14V3M4 7l4-4 4 4" stroke="#777" />
        </button>
        <span className="mr-[5px] h-5 border-l-2 border-dotted border-[#c4c4c4]" />
        <label className="flex h-6 flex-1 items-center gap-[5px] border border-r-0 border-[#6e6e6e] pl-[2px]">
          <RarIcon />
          <input
            aria-label="Archive path"
            readOnly
            className="w-full bg-transparent outline-none"
            value="Temp.7z - 7-Zip archive, unpacked size 5,254,207 bytes"
          />
        </label>
      </div>
      <div className="mt-px flex flex-1 flex-col border-y border-[#5a5a5a] bg-[linear-gradient(#fff_0_26px,#f7f7f7_26px)] bg-[length:257px_100%] bg-no-repeat pb-[3px] pt-px">
        <table className="w-[707px] table-fixed border-collapse text-left">
          <colgroup>
            <col className="w-[257px]" />
            <col className="w-20" />
            <col className="w-20" />
            <col className="w-[120px]" />
            <col className="w-[100px]" />
            <col className="w-[70px]" />
          </colgroup>
          <thead>
            <tr>
              <th aria-sort="ascending" className={`${th} relative`}>
                Name
                <svg viewBox="0 0 10 6" className="absolute left-[125px] top-0 h-[6px] w-[10px]" fill="none" stroke="#555">
                  <path d="M1 5l4-4 4 4" />
                </svg>
              </th>
              <th className={`${th} text-right`}>Size</th>
              <th className={`${th} text-right`}>Packed</th>
              <th className={th}>Type</th>
              <th className={th}>Modified</th>
              <th className={th}>CRC32</th>
            </tr>
          </thead>
          <tbody>
            {files.map((f) => (
              <tr key={f.name}>
                <td className="h-[19px] pl-[6px]">
                  <span className="flex items-center gap-[2px]">
                    <FileIcon kind={f.kind} />
                    {f.name}
                  </span>
                </td>
                <td className={`${td} text-right`}>{f.size}</td>
                <td className={`${td} text-right`}>{f.packed}</td>
                <td className={td}>{f.type}</td>
                <td className={td}>{f.modified}</td>
                <td className={td}>{f.crc}</td>
              </tr>
            ))}
          </tbody>
        </table>
      </div>
      <footer className="flex h-6 items-center bg-[#f0f0f0]">
        <div className="flex h-full w-[42px] items-center gap-[3px] border-r border-[#c8c8c8] pl-1">
          <svg viewBox="0 0 16 10" className="h-[10px] w-4">
            <rect x=".5" y="1.500" width="15" height="7" rx="1.500" fill="#c9ded9" stroke="#5c6b69" />
            <rect x="2.500" y="3.500" width="11" height="3" fill="#263534" />
          </svg>
          <svg viewBox="0 0 16 12" className="h-3 w-4" fill="none" stroke="#666" strokeWidth="1.200">
            <circle cx="10.500" cy="6" r="4.500" />
            <circle cx="11" cy="6" r="1.600" />
            <path d="M6 5H1v2h1v2h1.500V7.500H6" />
          </svg>
        </div>
        <span className="w-[450px]" />
        <span className="flex h-full flex-1 items-center border-l border-[#c8c8c8] pl-1 pt-[2px]">Total 2 files, 5,254,207 bytes</span>
      </footer>
    </section>
  );
}

/* ---------- watermark ---------- */

function Watermark() {
  return (
    <div className="absolute bottom-[8px] right-[48px] flex h-16 items-center gap-[6px] font-['Roboto_Condensed','Open_Sans_Condensed','Roboto',sans-serif] text-[38px] font-normal leading-none text-white/50">
      <span>ANY</span>
      <svg viewBox="0 0 56 62" className="h-[62px] w-14" fill="none" stroke="#fff" strokeOpacity=".5" strokeWidth="3.200" strokeLinejoin="round">
        <path d="M9 7 3 8v44l8-3 36-21" />
        <path d="M12 42V4c0-2 1.500-2 3-1l37 21" />
        <path d="M17 17l36 16-37 25c-2 1-3 0-3-2" />
        <path d="M50 21l3 3-1 4M14 56l27-19" />
      </svg>
      <span>RUN</span>
    </div>
  );
}

/* ---------- taskbar ---------- */

function TaskButton({ label, open = false, active = false, children }: Kids & { label: string; open?: boolean; active?: boolean }) {
  return (
    <button aria-label={label} className={`flex w-12 flex-col items-center ${active ? "bg-[#37474f]" : ""}`}>
      <span className="flex flex-1 items-center">{children}</span>
      <span className={`h-[2px] ${active ? "w-12" : "w-10"} ${open || active ? "bg-[#76b9ed]" : ""}`} />
    </button>
  );
}

function Taskbar() {
  return (
    <footer className="flex h-10 bg-[linear-gradient(90deg,#021822,#021520_60%,#020a1a)] text-white">
      <button aria-label="Start" className="flex w-12 items-center justify-center">
        <svg viewBox="0 0 16 16" className="size-4" fill="#fff">
          <path d="M0 2.200 6.600 1.300v6.300H0zM7.500 1.200 16 0v7.600H7.500zM0 8.500h6.600v6.300L0 13.900zM7.500 8.500H16V16l-8.500-1.200z" />
        </svg>
      </button>
      <label className="flex w-72 items-center gap-[9px] border border-[#bcbcbc] bg-[#f2f2f2] pl-[11px]">
        <svg viewBox="0 0 18 18" className="size-[18px] shrink-0" fill="none" stroke="#222" strokeWidth="1.300">
          <circle cx="11" cy="6.500" r="5.200" />
          <path d="M7.300 10.300 1 17" />
        </svg>
        <input aria-label="Search" placeholder="Type here to search" className="w-full bg-transparent text-[14px] text-black outline-none placeholder:text-[#333]" />
      </label>
      <div className="flex gap-px pl-[2px]">
        <TaskButton label="Task View">
          <svg viewBox="0 0 18 18" className="size-[18px]" fill="none" stroke="#fff" strokeWidth="1.200">
            <path d="M1.500 1v2.500h9V1M1.500 17v-2.500h9V17M1.500 6h9v6h-9zM14.500 1v3M14.500 8v9" />
            <path d="M13.500 4.500h2v2.500h-2z" fill="#fff" stroke="none" />
          </svg>
        </TaskButton>
        <TaskButton label="Microsoft Edge">
          <EdgeIcon className="size-6" />
        </TaskButton>
        <TaskButton label="File Explorer" open>
          <svg viewBox="0 0 24 24" className="size-6">
            <path d="M1 3h8l2 2h11v15H1z" fill="#e9a92b" />
            <path d="M1 7h21.500v14H1z" fill="#fcd873" />
            <path d="M5 22v-8.500h14V22h-3.500v-4.500h-7V22z" fill="#3b95dc" />
          </svg>
        </TaskButton>
        <TaskButton label="Firefox">
          <FirefoxIcon className="size-6" />
        </TaskButton>
        <TaskButton label="WinRAR" active>
          <RarIcon className="size-6" />
        </TaskButton>
      </div>
      <div className="ml-auto flex items-center gap-2">
        <div className="flex items-center gap-2">
          <svg viewBox="0 0 16 16" className="size-4" fill="none" stroke="#fff" strokeWidth="1.200">
            <path d="M2.500 10.500 8 5l5.500 5.500" />
          </svg>
          <svg viewBox="0 0 16 18" className="h-[18px] w-4" fill="none" stroke="#fff" strokeWidth="1.200">
            <rect x="3" y="5.500" width="7.500" height="7" rx="1.500" />
            <path d="M10.500 8 13 6.500v5L10.500 10M4 2.800c2-1.500 5-1.500 7 0M4 15.200c2 1.500 5 1.500 7 0" />
          </svg>
          <svg viewBox="0 0 16 16" className="size-4" fill="none" stroke="#fff" strokeWidth="1.100">
            <path d="M5.500 3.500h10v8h-10M10.500 11.500V14M7 14.500h7M.5 2h5v4h-5zM3 6v8.500h3" />
          </svg>
          <svg viewBox="0 0 18 16" className="h-4 w-[18px]" fill="none" stroke="#fff" strokeWidth="1.200">
            <path d="M1 5.500h3L8 2v12L4 10.500H1zM10 5.500c1.500 1.500 1.500 3.500 0 5M12.500 3.500c2.500 2.500 2.500 6.500 0 9M15 1.500c3.200 3.500 3.200 9.500 0 13" />
          </svg>
        </div>
        <div className="flex items-center gap-2">
          <div className="-ml-1 w-[58px] text-center text-[11px] leading-[18px]">
            <div>1:45 PM</div>
            <div>11/24/2024</div>
          </div>
          <button aria-label="Notifications" className="mr-1 flex w-8 items-center justify-center">
            <svg viewBox="0 0 18 18" className="size-[18px]" fill="none" stroke="#fff" strokeWidth="1.200">
              <path d="M1.500 2.500h15v11H11l-2.500 2.500L6 13.500H1.500z" />
            </svg>
          </button>
          <span className="mr-1 h-10 w-px bg-[#4b5560]" />
        </div>
      </div>
    </footer>
  );
}

export default function App() {
  return (
    <div className="flex h-screen flex-col overflow-hidden font-['Open_Sans','Noto_Sans',sans-serif]">
      <Gradients />
      <main className="relative flex-1 bg-[radial-gradient(ellipse_80%_165%_at_8%_80%,#00b6ff_0%,#00acfd_35%,#008aec_66%,#0564d4_92%,#0645b9_118%)]">
        <DesktopIcons />
        <Explorer />
        <Archive />
        <Watermark />
      </main>
      <Taskbar />
    </div>
  );
}
